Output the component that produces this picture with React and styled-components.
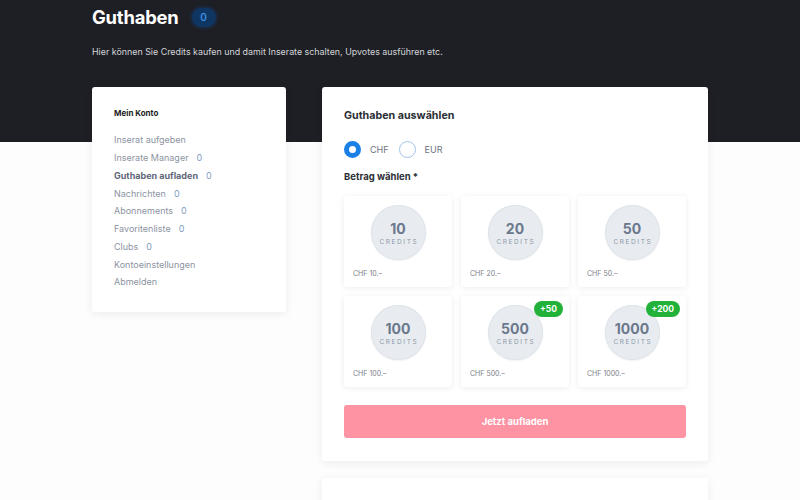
import React from "react";
import styled, { createGlobalStyle } from "styled-components";

const GlobalStyle = createGlobalStyle`
  html, body {
    margin: 0;
    padding: 0;
  }
  body {
    font-family: Inter, "Noto Sans", sans-serif;
    background: #fdfdfd;
  }
`;

const Page = styled.div`
  width: 800px;
  height: 500px;
  overflow: hidden;
  background: linear-gradient(to bottom, #1e1f24 0, #1e1f24 142px, #fdfdfd 142px);
`;

const Wrap = styled.div`
  width: 616px;
  margin: 0 auto;
`;

const Head = styled.div`
  padding-top: 5px;
  height: 82px;
`;

const TitleRow = styled.div`
  display: flex;
  align-items: center;
  gap: 13px;
  height: 24px;
`;

const Title = styled.h1`
  margin: 0;
  font-size: 18.4px;
  font-weight: 700;
  color: #ffffff;
  letter-spacing: -0.2px;
`;

const HeadBadge = styled.span`
  display: inline-flex;
  align-items: center;
  justify-content: center;
  width: 24px;
  height: 19px;
  border-radius: 10px;
  background: #0f3563;
  box-shadow: 0 0 4px rgba(20, 80, 160, 0.6);
  color: #3d8de0;
  font-size: 10px;
  font-weight: 600;
`;

const Subtitle = styled.p`
  margin: 17px 0 0;
  font-size: 8.9px;
  color: #d4d5d9;
`;

const Columns = styled.div`
  display: flex;
  align-items: flex-start;
  gap: 36px;
`;

const Card = styled.div`
  background: #ffffff;
  border-radius: 3px;
  box-shadow: 0 2px 10px rgba(0, 0, 0, 0.07);
`;

const SideCard = styled(Card)`
  width: 194px;
  height: 225px;
  box-sizing: border-box;
  padding: 21px 22px;
`;

const SideTitle = styled.div`
  font-size: 8px;
  font-weight: 700;
  color: #222;
  margin-bottom: 13px;
`;

const NavList = styled.ul`
  list-style: none;
  margin: 0;
  padding: 0;
`;

const NavItem = styled.li`
  display: flex;
  align-items: center;
  height: 17.75px;
  font-size: 9px;
  color: ${(p) => (p.active ? "#5f6778" : "#8c93a1")};
  font-weight: ${(p) => (p.active ? 700 : 400)};
`;

const NavCount = styled.span`
  margin-left: 8px;
  color: #7f9dc2;
  font-weight: 400;
`;

const MainCol = styled.div`
  width: 386px;
  display: flex;
  flex-direction: column;
  gap: 17px;
`;

const MainCard = styled(Card)`
  height: 374px;
  box-sizing: border-box;
  padding: 22px 22px;
`;

const CardTitle = styled.h2`
  margin: 0;
  font-size: 10.7px;
  font-weight: 700;
  color: #2b2e35;
`;

const RadioRow = styled.div`
  display: flex;
  align-items: center;
  margin-top: 19px;
  gap: 9px;
`;

const Radio = styled.span`
  box-sizing: border-box;
  width: 17px;
  height: 17px;
  border-radius: 50%;
  border: ${(p) => (p.checked ? "5px solid #1a80e6" : "1px solid #9fc3e8")};
  background: #fff;
`;

const RadioLabel = styled.span`
  font-size: 9px;
  color: #6d7380;
  margin-right: 1px;
`;

const Label = styled.div`
  margin-top: 13px;
  font-size: 9.5px;
  font-weight: 700;
  color: #2b2e35;
`;

const Grid = styled.div`
  margin-top: 14px;
  display: grid;
  grid-template-columns: repeat(3, 108px);
  grid-auto-rows: 91px;
  gap: 9px;
`;

const Tile = styled.div`
  position: relative;
  background: #fff;
  border-radius: 3px;
  box-shadow: 0 1px 6px rgba(0, 0, 0, 0.08);
  display: flex;
  flex-direction: column;
  align-items: center;
  padding-top: 9px;
  box-sizing: border-box;
`;

const Coin = styled.div`
  width: 55px;
  height: 55px;
  border-radius: 50%;
  background: #e8ecf1;
  box-shadow: inset 0 0 0 1px #dfe4ea, 0 1px 2px rgba(0, 0, 0, 0.06);
  display: flex;
  flex-direction: column;
  align-items: center;
  justify-content: center;
  padding-top: 2px;
  box-sizing: border-box;
`;

const Amount = styled.span`
  font-size: 14px;
  font-weight: 700;
  line-height: 14px;
  color: #6b788c;
`;

const CreditsText = styled.span`
  margin-top: 2px;
  font-size: 6.5px;
  letter-spacing: 1.6px;
  color: #8d97a6;
  padding-left: 1.6px;
`;

const Price = styled.div`
  align-self: flex-start;
  margin: 9px 0 0 9px;
  font-size: 7px;
  color: #7b808a;
`;

const Bonus = styled.span`
  position: absolute;
  top: 5px;
  right: 6px;
  height: 16px;
  padding: 0 6px;
  border-radius: 8px;
  background: #22b23a;
  color: #fff;
  font-size: 8.5px;
  font-weight: 700;
  display: flex;
  align-items: center;
`;

const Button = styled.button`
  margin-top: 18px;
  width: 100%;
  height: 33px;
  border: none;
  border-radius: 3px;
  background: #fd93a3;
  color: #fff;
  font-family: inherit;
  font-size: 9.5px;
  font-weight: 700;
`;

const NextCard = styled(Card)`
  height: 60px;
`;

const nav = [
  { label: "Inserat aufgeben" },
  { label: "Inserate Manager", count: 0 },
  { label: "Guthaben aufladen", count: 0, active: true },
  { label: "Nachrichten", count: 0 },
  { label: "Abonnements", count: 0 },
  { label: "Favoritenliste", count: 0 },
  { label: "Clubs", count: 0 },
  { label: "Kontoeinstellungen" },
  { label: "Abmelden" },
];

const packs = [
  { credits: 10 },
  { credits: 20 },
  { credits: 50 },
  { credits: 100 },
  { credits: 500, bonus: "+50" },
  { credits: 1000, bonus: "+200" },
];

export default function App() {
  return (
    <Page>
      <GlobalStyle />
      <Wrap>
        <Head>
          <TitleRow>
            <Title>Guthaben</Title>
            <HeadBadge>0</HeadBadge>
          </TitleRow>
          <Subtitle>
            Hier können Sie Credits kaufen und damit Inserate schalten, Upvotes ausführen etc.
          </Subtitle>
        </Head>
        <Columns>
          <SideCard>
            <SideTitle>Mein Konto</SideTitle>
            <NavList>
              {nav.map((n) => (
                <NavItem key={n.label} active={n.active}>
                  {n.label}
                  {n.count !== undefined && <NavCount>{n.count}</NavCount>}
                </NavItem>
              ))}
            </NavList>
          </SideCard>
          <MainCol>
            <MainCard>
              <CardTitle>Guthaben auswählen</CardTitle>
              <RadioRow>
                <Radio checked />
                <RadioLabel>CHF</RadioLabel>
                <Radio />
                <RadioLabel>EUR</RadioLabel>
              </RadioRow>
              <Label>Betrag wählen *</Label>
              <Grid>
                {packs.map((p) => (
                  <Tile key={p.credits}>
                    {p.bonus && <Bonus>{p.bonus}</Bonus>}
                    <Coin>
                      <Amount>{p.credits}</Amount>
                      <CreditsText>CREDITS</CreditsText>
                    </Coin>
                    <Price>CHF {p.credits}.–</Price>
                  </Tile>
                ))}
              </Grid>
              <Button>Jetzt aufladen</Button>
            </MainCard>
            <NextCard />
          </MainCol>
        </Columns>
      </Wrap>
    </Page>
  );
}
